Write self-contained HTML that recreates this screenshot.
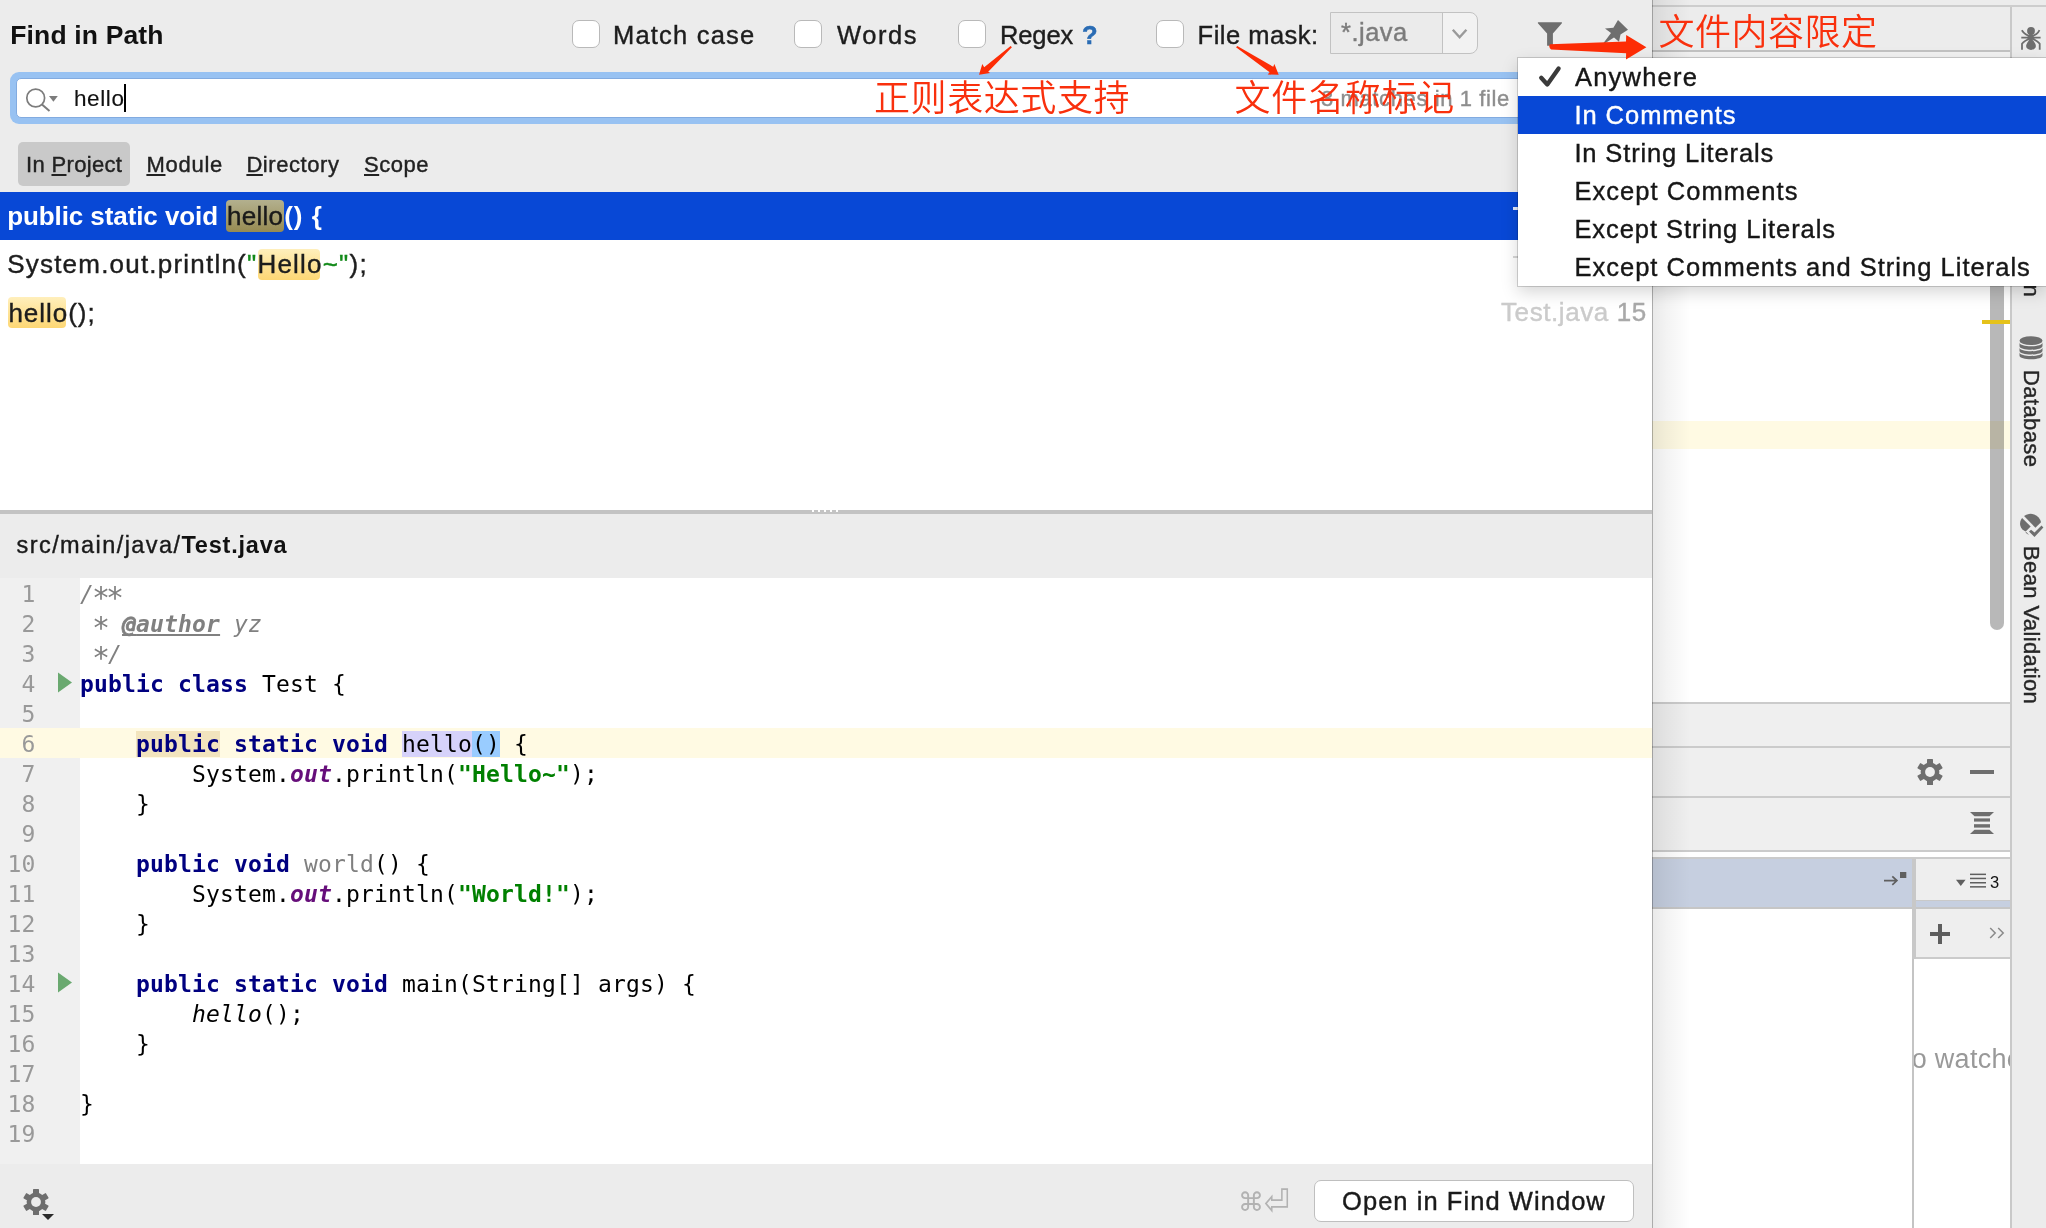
<!DOCTYPE html>
<html><head><meta charset="utf-8"><title>Find in Path</title>
<style>
html,body{margin:0;padding:0}
body{will-change:transform;width:2046px;height:1228px;position:relative;overflow:hidden;background:#fff;font-family:"Liberation Sans","Noto Sans CJK SC",sans-serif;color:#1d1d1d}
.a{position:absolute}
.t{position:absolute;white-space:pre;line-height:1;-webkit-text-stroke:.4px currentColor}
.cb{position:absolute;width:26px;height:26px;border:1px solid #b9b9b9;border-radius:7px;background:#fff}
.red{-webkit-text-stroke:0;font-weight:350;color:#f9300d;font-family:"Liberation Sans","Noto Sans CJK SC",sans-serif}
.sc u{text-decoration-thickness:1.5px;text-underline-offset:2px}
.ln,.cl{position:absolute;white-space:pre;font-family:"DejaVu Sans Mono","Liberation Mono",monospace;font-size:23px;letter-spacing:.153px;line-height:30px;height:30px}
.ln{left:0;width:35.4px;text-align:right;color:#999}
.cl{left:80px;color:#000}
.cl s{display:inline-block;text-decoration:none;font-style:normal;transform:translateY(3.6px) scale(1.3)}
.cl u{text-decoration-skip-ink:none}
.kw{color:#000080}.cm{color:#808080;font-style:italic}.fld{color:#660e7a;font-style:italic}.str{color:#008000}
</style></head><body>
<!-- IDE background -->
<div class="a" style="left:1652px;top:0px;width:394px;height:1228px;background:#fff;"></div>
<div class="a" style="left:1652px;top:0px;width:394px;height:58px;background:#ececec;"></div>
<div class="a" style="left:1652px;top:5px;width:394px;height:2px;background:#cdcdcd;"></div>
<div class="a" style="left:1652px;top:50px;width:358px;height:2px;background:#c2c2c2;"></div>
<div class="a" style="left:1652px;top:52px;width:358px;height:6px;background:#f2f2f2;"></div>
<div class="a" style="left:1652px;top:421px;width:358px;height:28px;background:#fffae3;"></div>
<div class="a" style="left:1990px;top:200px;width:14px;height:430px;background:rgba(0,0,0,.28);border-radius:7px"></div>
<div class="a" style="left:1982px;top:320px;width:28px;height:4px;background:#e5c21a;"></div>
<div class="a" style="left:1652px;top:703px;width:358px;height:148px;background:#efefef;"></div>
<div class="a" style="left:1652px;top:702px;width:358px;height:2px;background:#cbcbcb;"></div>
<div class="a" style="left:1652px;top:746px;width:358px;height:2px;background:#cbcbcb;"></div>
<div class="a" style="left:1652px;top:796px;width:358px;height:2px;background:#cbcbcb;"></div>
<div class="a" style="left:1652px;top:850px;width:358px;height:2px;background:#cbcbcb;"></div>
<svg class="a" style="left:1917px;top:759px" width="26" height="26" viewBox="-13 -13 26 26"><g fill="#6e6e6e"><circle r="9.4"/><rect x="-3" y="-13" width="6" height="26" rx=".6" transform="rotate(0)"/><rect x="-3" y="-13" width="6" height="26" rx=".6" transform="rotate(60)"/><rect x="-3" y="-13" width="6" height="26" rx=".6" transform="rotate(120)"/></g><circle r="4.9" fill="#efefef"/></svg>
<div class="a" style="left:1970px;top:770px;width:24px;height:4px;background:#6e6e6e;"></div>
<svg class="a" style="left:1969px;top:811px" width="26" height="24" viewBox="0 0 26 24"><g fill="#6e6e6e"><path d="M1 1h24l-4.5 4.2h-15z"/><rect x="5" y="7.4" width="16" height="3.2"/><rect x="5" y="13.2" width="16" height="3.4"/><path d="M5.5 18.8h15l4.5 4.2h-24z"/></g></svg>
<div class="a" style="left:1652px;top:858px;width:358px;height:50px;background:#c6cfe0;"></div>
<div class="a" style="left:1652px;top:857px;width:358px;height:2px;background:#cbcbcb;"></div>
<div class="a" style="left:1652px;top:907px;width:358px;height:2px;background:#c6c6c6;"></div>
<div class="a" style="left:1916px;top:859px;width:94px;height:41px;background:#eeeeee;"></div>
<div class="a" style="left:1912px;top:859px;width:2px;height:369px;background:#c4c4c4;"></div>
<div class="a" style="left:1912px;top:859px;width:4px;height:100px;background:#c8c8c8;"></div>
<div class="a" style="left:1916px;top:900px;width:94px;height:1px;background:#c9c9c9;"></div>
<svg class="a" style="left:1882px;top:870px" width="28" height="20" viewBox="0 0 28 20"><path d="M2 10.6h12.5M10.3 6.3l4.6 4.3-4.6 4.3" stroke="#5f5f5f" stroke-width="1.7" fill="none"/><rect x="18" y="2" width="6.3" height="6" fill="#5f5f5f"/></svg>
<svg class="a" style="left:1954px;top:870px" width="36" height="20" viewBox="0 0 36 20"><path d="M2 9.7h9.6l-4.8 6.3z" fill="#5f5f5f"/><g fill="#5f5f5f"><rect x="16" y="3.6" width="16" height="1.5"/><rect x="16" y="7.7" width="16" height="1.5"/><rect x="16" y="12" width="16" height="1.5"/><rect x="16" y="16.1" width="16" height="1.5"/></g></svg>
<div class="t" style="left:1990px;top:874px;font-size:16.5px;color:#111;-webkit-text-stroke:0">3</div>
<div class="a" style="left:1916px;top:909px;width:94px;height:48px;background:#eeeeee;"></div>
<div class="a" style="left:1916px;top:957px;width:94px;height:2px;background:#cbcbcb;"></div>
<div class="a" style="left:1930px;top:931.6px;width:20px;height:4.4px;background:#5e5e5e;"></div>
<div class="a" style="left:1937.8px;top:923.6px;width:4.4px;height:20.2px;background:#5e5e5e;"></div>
<svg class="a" style="left:1988px;top:925px" width="18" height="16" viewBox="0 0 18 16"><path d="M2.2 3l5 5-5 5M10.2 3l5 5-5 5" stroke="#8a8a8a" stroke-width="1.5" fill="none"/></svg>
<div class="a" style="left:1914px;top:1036px;width:96px;height:44px;overflow:hidden"><div class="t" style="left:-2.3px;top:10.1px;font-size:27px;color:#999;letter-spacing:.3px;-webkit-text-stroke:0">o watches</div></div>
<div class="a" style="left:1652px;top:0px;width:38px;height:1228px;background:linear-gradient(90deg,rgba(0,0,0,.085),rgba(0,0,0,.05) 35%,rgba(0,0,0,.02) 75%,rgba(0,0,0,0));"></div>
<div class="a" style="left:1652px;top:0px;width:1px;height:1228px;background:rgba(0,0,0,.26);"></div>
<div class="a" style="left:2010px;top:5px;width:36px;height:1223px;background:#ececec;"></div>
<div class="a" style="left:2010px;top:5px;width:2px;height:1223px;background:#c9c9c9;"></div>
<div class="a" style="left:2010px;top:5px;width:36px;height:2px;background:#cdcdcd;"></div>
<svg class="a" style="left:2010px;top:16px" width="36" height="40" viewBox="0 0 36 40"><g fill="#6e6e6e"><circle cx="21" cy="14.9" r="3.9"/><ellipse cx="21" cy="21" rx="2.7" ry="3.2"/><path d="M21 22.2C24 25 25.9 28 25.9 30A4.9 3.9 0 0 1 16.1 30C16.1 28 18 25 21 22.2z"/></g><g stroke="#6e6e6e" stroke-width="1.8" fill="none"><path d="M21 20.3Q15 19.3 11.8 14.2M21 20.3Q27 19.3 29.5 14.2M11.3 21.6H30.6M21 22Q14 25 12 27.8V33.8M21 22Q28 25 29.7 27.8V33.8"/></g></svg>
<div id="v_maven" class="t" style="left:2042.2px;top:229px;font-size:22px;color:#262626;transform-origin:0 0;transform:rotate(90deg);letter-spacing:0.4px">Maven</div>
<svg class="a" style="left:2019.3px;top:336px" width="24" height="24" viewBox="0 0 24 24"><g fill="#6e6e6e"><ellipse cx="12" cy="4.7" rx="11.5" ry="4.4"/><path d="M.500 6.6C.500 11.6 23.5 11.6 23.5 6.6v3.3C23.5 14.899999999999999 .500 14.899999999999999 .500 9.899999999999999z"/><path d="M.500 11.4C.500 16.4 23.5 16.4 23.5 11.4v3.3C23.5 19.7 .500 19.7 .500 14.7z"/><path d="M.500 16.2C.500 21.2 23.5 21.2 23.5 16.2v3.3C23.5 24.5 .500 24.5 .500 19.5z"/></g></svg>
<div id="v_db" class="t" style="left:2042.2px;top:370.3px;font-size:22px;color:#262626;transform-origin:0 0;transform:rotate(90deg);letter-spacing:0.39px">Database</div>
<svg class="a" style="left:2012px;top:506px" width="34" height="40" viewBox="0 0 34 40"><g fill="#6e6e6e"><path d="M12.05 10.1A10.6 10.6 0 0 1 29 16.3L23.45 21.65z"/><path d="M10.1 12.05L18.7 20.5 13.7 25.4A8.3 8.3 0 0 1 10.1 12.05z"/><path d="M13.3 26.3Q14.8 28 17 28.9L14.6 26.3z"/><path d="M17 25.5L19.05 23.8 22.5 26.5 29.5 19.4 31.4 21.5 22.5 30.9z"/></g></svg>
<div id="v_bean" class="t" style="left:2042.2px;top:546px;font-size:22px;color:#262626;transform-origin:0 0;transform:rotate(90deg);letter-spacing:0.38px">Bean Validation</div>
<!-- Find in Path dialog -->
<div class="a" style="left:0px;top:0px;width:1652px;height:1228px;background:#ececec;"></div>
<div id="t_title" class="t " style="left:10.2px;top:21.82px;font-size:26.5px;color:#111;letter-spacing:0.155px;font-weight:bold;-webkit-text-stroke:0;">Find in Path</div>
<div class="cb" style="left:572px;top:20px"></div>
<div class="cb" style="left:794px;top:20px"></div>
<div class="cb" style="left:958px;top:20px"></div>
<div class="cb" style="left:1156px;top:20px"></div>
<div id="t_mc" class="t " style="left:613px;top:23.11px;font-size:25.5px;color:#1d1d1d;letter-spacing:1.194px;">Match case</div>
<div id="t_words" class="t " style="left:837px;top:23.11px;font-size:25.5px;color:#1d1d1d;letter-spacing:1.562px;">Words</div>
<div id="t_regex" class="t " style="left:1000px;top:23.11px;font-size:25.5px;color:#1d1d1d;letter-spacing:-0.125px;">Regex</div>
<div id="t_q" class="t " style="left:1082px;top:23.11px;font-size:25.5px;color:#2a6cb4;letter-spacing:0px;font-weight:bold;-webkit-text-stroke:0;-webkit-text-stroke:.5px #2a6cb4;">?</div>
<div id="t_fm" class="t " style="left:1197.6px;top:23.11px;font-size:25.5px;color:#1d1d1d;letter-spacing:0.478px;">File mask:</div>
<div class="a" style="left:1330px;top:12px;width:146px;height:40px;border:1px solid #c2c2c2;border-radius:0 8px 8px 0;background:linear-gradient(90deg,#ebebeb 112px,#f2f2f2 112px)"></div>
<div class="a" style="left:1442px;top:13px;width:1px;height:40px;background:#c2c2c2;"></div>
<div id="t_java" class="t " style="left:1341px;top:20.41px;font-size:25.5px;color:#7b7b7b;letter-spacing:0.5px;">*.java</div>
<svg class="a" style="left:1449px;top:25px" width="22" height="16" viewBox="0 0 22 16"><path d="M3.8 4.7l6.8 7.5 6.8-7.5" stroke="#9a9a9a" stroke-width="2.4" fill="none"/></svg>
<svg class="a" style="left:1536px;top:20px" width="28" height="28" viewBox="0 0 28 28"><path d="M1.9 2.2h24v1l-9 10.3v12.2h-5.8v-12.2l-9.2-10.3z" fill="#6e6e6e"/></svg>
<svg class="a" style="left:1600px;top:16px" width="32" height="32" viewBox="0 0 32 32"><path d="M18 4l10 9.7-7.5 4.8-1.5 7.3-5-4.3-11 7 .500-1.5 7.5-10-6-4.5 8.4-.800z" fill="#6e6e6e"/></svg>
<div class="a" style="left:10px;top:72px;width:1620px;height:52px;background:#98c2f2;border-radius:9px"></div>
<div class="a" style="left:16px;top:78px;width:1608px;height:40px;background:#fff;border:1px solid #82abe0;border-radius:5px;box-sizing:border-box"></div>
<svg class="a" style="left:22px;top:84px" width="40" height="30" viewBox="0 0 40 30"><circle cx="13.7" cy="14" r="8.9" stroke="#7c7c7c" stroke-width="1.7" fill="none"/><path d="M20 20.5l7.5 6.5" stroke="#7c7c7c" stroke-width="2"/><path d="M27 12h8.8l-4.4 5.8z" fill="#7c7c7c"/></svg>
<div id="t_hello" class="t " style="left:74px;top:87.65px;font-size:22.5px;color:#111;letter-spacing:0.6px;-webkit-text-stroke:.15px #111;">hello</div>
<div class="a" style="left:124.2px;top:84.2px;width:1.8px;height:27.6px;background:#000;"></div>
<div id="t_matches" class="t " style="left:1321px;top:88.18px;font-size:22px;color:#8e8e8e;letter-spacing:0.611px;">3 matches in 1 file</div>
<div class="a" style="left:18px;top:142px;width:112px;height:44px;background:#c9c9c9;border-radius:5px"></div>
<div id="t_inproj" class="t sc" style="left:26px;top:153.98px;font-size:22px;color:#222;letter-spacing:0.333px;">In <u>P</u>roject</div>
<div id="t_module" class="t sc" style="left:146.4px;top:153.98px;font-size:22px;color:#222;letter-spacing:0.76px;"><u>M</u>odule</div>
<div id="t_dir" class="t sc" style="left:246.4px;top:153.98px;font-size:22px;color:#222;letter-spacing:0.562px;"><u>D</u>irectory</div>
<div id="t_scope" class="t sc" style="left:364px;top:153.98px;font-size:22px;color:#222;letter-spacing:0.5px;"><u>S</u>cope</div>
<div class="a" style="left:0px;top:192px;width:1652px;height:318px;background:#fff;"></div>
<div class="a" style="left:0px;top:192px;width:1652px;height:48px;background:#0848d6;"></div>
<div class="a" style="left:226px;top:199.7px;width:58px;height:32px;background:linear-gradient(#b3b08e,#978b52);border-radius:4px"></div>
<div id="t_r1a" class="t " style="left:7.2px;top:203.49px;font-size:26px;color:#fff;letter-spacing:-0.088px;font-weight:bold;-webkit-text-stroke:0;">public static void</div>
<div id="t_r1b" class="t " style="left:227px;top:203.49px;font-size:26px;color:#1a1a1a;letter-spacing:0.25px;">hello</div>
<div id="t_r1c" class="t " style="left:284.2px;top:203.49px;font-size:26px;color:#fff;letter-spacing:0.967px;font-weight:bold;-webkit-text-stroke:0;">() {</div>
<div class="a" style="left:1513px;top:207px;width:6px;height:3px;background:#e4eafb;"></div>
<div class="a" style="left:258px;top:248.5px;width:62px;height:31px;background:linear-gradient(#ffefbc,#fdd774);border-radius:4px"></div>
<div id="t_r2" class="t " style="left:7.2px;top:251.39px;font-size:26px;color:#1d1d1d;letter-spacing:1.211px;">System.out.println(<span style="color:#138a1a">"</span>Hello<span style="color:#138a1a">~"</span>);</div>
<div class="a" style="left:8px;top:296.5px;width:58px;height:31px;background:linear-gradient(#ffefbc,#fdd774);border-radius:4px"></div>
<div id="t_r3" class="t " style="left:8.4px;top:299.59px;font-size:26px;color:#1d1d1d;letter-spacing:0.971px;">hello();</div>
<div id="t_r3f" class="t " style="left:1501px;top:299.39px;font-size:26px;color:#cbcbcb;letter-spacing:0.591px;">Test.java <span style="color:#a9a9a9">15</span></div>
<div class="a" style="left:1513px;top:256px;width:6px;height:2px;background:#d6d6d6;"></div>
<div class="a" style="left:0px;top:510px;width:1652px;height:4px;background:#c3c3c3;"></div>
<div class="a" style="left:812px;top:510px;width:26px;height:2px;background:repeating-linear-gradient(90deg,#fff 0 2px,transparent 2px 6px);"></div>
<div id="t_p1" class="t " style="left:16.6px;top:533.91px;font-size:23.5px;color:#1a1a1a;letter-spacing:1.415px;">src/main/java/</div>
<div id="t_p2" class="t " style="left:181.4px;top:533.91px;font-size:23.5px;color:#111;letter-spacing:0.8px;font-weight:bold;-webkit-text-stroke:0;">Test.java</div>
<div class="a" style="left:0px;top:578px;width:1652px;height:586px;background:#fff;"></div>
<div class="a" style="left:0px;top:578px;width:80px;height:586px;background:#f0f0f0;"></div>
<div class="a" style="left:0px;top:728px;width:1652px;height:30px;background:#fffae3;"></div>
<svg class="a" style="left:57px;top:672px" width="16" height="21" viewBox="0 0 16 21"><path d="M1 .500l14 10-14 10z" fill="#6aa970"/></svg>
<svg class="a" style="left:57px;top:972px" width="16" height="21" viewBox="0 0 16 21"><path d="M1 .500l14 10-14 10z" fill="#6aa970"/></svg>
<div class="ln" style="top:579px">1</div><div class="cl" style="top:579px"><span class="cm">/<s>*</s><s>*</s></span></div>
<div class="ln" style="top:609px">2</div><div class="cl" style="top:609px"><span class="cm"> <s>*</s> <b><u><span style="-webkit-text-stroke:.7px #808080">@</span>author</u></b> yz</span></div>
<div class="ln" style="top:639px">3</div><div class="cl" style="top:639px"><span class="cm"> <s>*</s>/</span></div>
<div class="ln" style="top:669px">4</div><div class="cl" style="top:669px"><b class="kw">public class</b> Test {</div>
<div class="ln" style="top:699px">5</div><div class="cl" style="top:699px"></div>
<div class="ln" style="top:729px">6</div><div class="cl" style="top:729px">    <b class="kw" style="background:#f2e4be">public</b> <b class="kw">static void</b> <span style="background:#d6d2fa">hello</span><span style="background:#99ccff">()</span> {</div>
<div class="ln" style="top:759px">7</div><div class="cl" style="top:759px">        System.<b class="fld">out</b>.println(<b class="str">"Hello~"</b>);</div>
<div class="ln" style="top:789px">8</div><div class="cl" style="top:789px">    }</div>
<div class="ln" style="top:819px">9</div><div class="cl" style="top:819px"></div>
<div class="ln" style="top:849px">10</div><div class="cl" style="top:849px">    <b class="kw">public void</b> <span style="color:#808080">world</span>() {</div>
<div class="ln" style="top:879px">11</div><div class="cl" style="top:879px">        System.<b class="fld">out</b>.println(<b class="str">"World!"</b>);</div>
<div class="ln" style="top:909px">12</div><div class="cl" style="top:909px">    }</div>
<div class="ln" style="top:939px">13</div><div class="cl" style="top:939px"></div>
<div class="ln" style="top:969px">14</div><div class="cl" style="top:969px">    <b class="kw">public static void</b> main(String[] args) {</div>
<div class="ln" style="top:999px">15</div><div class="cl" style="top:999px">        <i>hello</i>();</div>
<div class="ln" style="top:1029px">16</div><div class="cl" style="top:1029px">    }</div>
<div class="ln" style="top:1059px">17</div><div class="cl" style="top:1059px"></div>
<div class="ln" style="top:1089px">18</div><div class="cl" style="top:1089px">}</div>
<div class="ln" style="top:1119px">19</div><div class="cl" style="top:1119px"></div>
<div class="a" style="left:0px;top:1164px;width:1652px;height:64px;background:#ececec;"></div>
<svg class="a" style="left:23px;top:1189px" width="26" height="26" viewBox="-13 -13 26 26"><g fill="#6e6e6e"><circle r="9.4"/><rect x="-3" y="-13" width="6" height="26" rx=".6" transform="rotate(0)"/><rect x="-3" y="-13" width="6" height="26" rx=".6" transform="rotate(60)"/><rect x="-3" y="-13" width="6" height="26" rx=".6" transform="rotate(120)"/></g><circle r="4.9" fill="#ececec"/></svg>
<svg class="a" style="left:41px;top:1213px" width="14" height="8" viewBox="0 0 14 8"><path d="M1 1h12l-6 6z" fill="#2b2b2b"/></svg>
<div id="k_cmd" class="t" style="left:1238px;top:1188.5px;font-size:26px;font-family:'DejaVu Sans','Liberation Sans',sans-serif;-webkit-text-stroke:0;color:#b2b2b2">&#8984;</div>
<div id="k_ret" class="t" style="left:1264px;top:1184.2px;font-size:33px;transform-origin:0 0;transform:scale(.94,1.1);font-family:'DejaVu Sans','Liberation Sans',sans-serif;-webkit-text-stroke:0;color:#b2b2b2">&#9166;</div>
<div class="a" style="left:1314px;top:1180px;width:318px;height:40px;border:1px solid #bfbfbf;border-radius:7px;background:#fff"></div>
<div id="t_open" class="t " style="left:1342px;top:1189.21px;font-size:25.5px;color:#1a1a1a;letter-spacing:1.056px;">Open in Find Window</div>
<!-- popup menu -->
<div class="a" style="left:1518px;top:58px;width:528px;height:228px;background:#fff;box-shadow:0 6px 16px rgba(0,0,0,.17),0 0 0 1px rgba(0,0,0,.16)"></div>
<div class="a" style="left:1518px;top:96px;width:528px;height:38px;background:#0848d6;"></div>
<svg class="a" style="left:1536px;top:64px" width="28" height="26" viewBox="0 0 28 26"><path d="M5.2 13.8l6.1 6.7L22.6 4.4" stroke="#3a3a3a" stroke-width="4.3" stroke-linecap="round" stroke-linejoin="round" fill="none"/></svg>
<div id="t_pm0" class="t " style="left:1575px;top:64.91px;font-size:25.5px;color:#161616;letter-spacing:1.214px;">Anywhere</div>
<div id="t_pm1" class="t " style="left:1574.4px;top:102.85px;font-size:25.5px;color:#fff;letter-spacing:0.96px;">In Comments</div>
<div id="t_pm2" class="t " style="left:1574.4px;top:140.79px;font-size:25.5px;color:#161616;letter-spacing:0.859px;">In String Literals</div>
<div id="t_pm3" class="t " style="left:1574.4px;top:178.73px;font-size:25.5px;color:#161616;letter-spacing:1.05px;">Except Comments</div>
<div id="t_pm4" class="t " style="left:1574.4px;top:216.67px;font-size:25.5px;color:#161616;letter-spacing:0.938px;">Except String Literals</div>
<div id="t_pm5" class="t " style="left:1574.4px;top:254.61px;font-size:25.5px;color:#161616;letter-spacing:1.015px;">Except Comments and String Literals</div>
<!-- annotations -->
<div id="c_1" class="t red" style="left:1658.6px;top:14.9px;font-size:36px;letter-spacing:0.5px">文件内容限定</div>
<div id="c_2" class="t red" style="left:874px;top:81.1px;font-size:36px;letter-spacing:0.58px">正则表达式支持</div>
<div id="c_3" class="t red" style="left:1234.5px;top:81px;font-size:36px;letter-spacing:0.74px">文件名称标记</div>
<svg class="a" style="left:0;top:0" width="2046" height="140" viewBox="0 0 2046 140"><g fill="#fd2c05"><path d="M1010.6 46L1011.9 47.3 988.2 71.7 990.2 72.9 979 74.8 982.3 64 984.2 67.3z"/><path d="M1237.3 45.9L1273.2 66.8 1274.4 63.9 1278.7 74.7 1267.7 74.6 1269.6 72.2 1236 47.2z"/><path d="M1550 44.3l76 -2.7 .200 -6.6 20.2 12.3 -20.4 12.3 .100 -6.3 -75 -3.8 q-3-2.6 -1.1-5.2z"/></g></svg>
</body></html>
